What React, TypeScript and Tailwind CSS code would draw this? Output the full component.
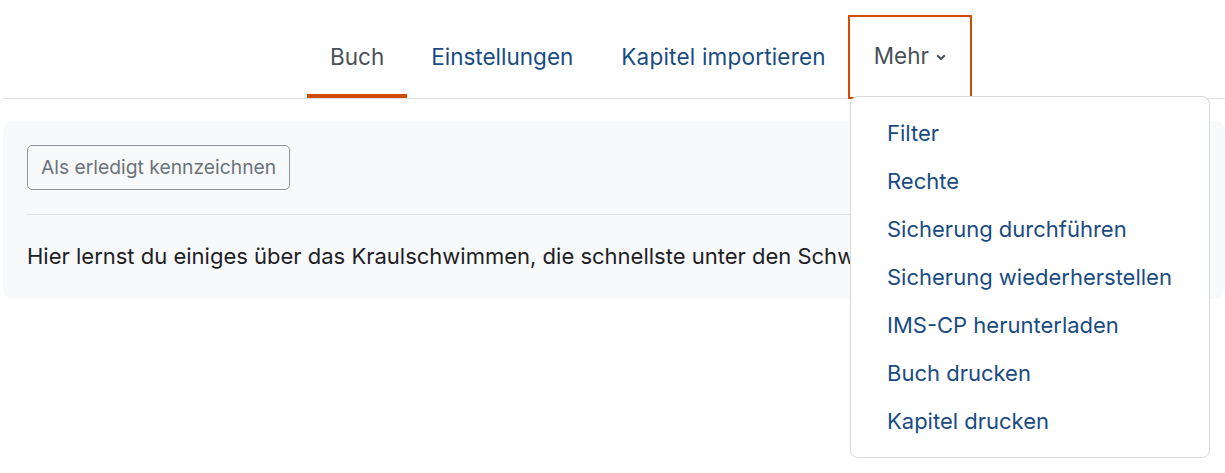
const tabs = ["Buch", "Einstellungen", "Kapitel importieren"];

const menuItems = [
  "Filter",
  "Rechte",
  "Sicherung durchführen",
  "Sicherung wiederherstellen",
  "IMS-CP herunterladen",
  "Buch drucken",
  "Kapitel drucken",
];

export default function App() {
  return (
    <div
      className="relative min-h-screen bg-white overflow-hidden pl-[3px]"
      style={{ fontFamily: "Inter, 'Noto Sans', sans-serif" }}
    >
      {/* Navigation */}
      <nav className="flex pl-[304px] pt-[17px] border-b border-[#dee2e6]">
        {tabs.map((t, i) => (
          <a
            key={t}
            href="#"
            className={
              i === 0
                ? "h-[81px] px-[23px] flex items-center text-[22.5px] text-[#495057] border-b-4 border-[#d14b02] pt-[2px]"
                : i === 2
                ? "h-[81px] px-6 flex items-center text-[22.5px] tracking-[0.2px] text-[#194b83] pb-[2px]"
                : "h-[81px] px-6 flex items-center text-[22.5px] text-[#194b83] pb-[2px]"
            }
          >
            {t}
          </a>
        ))}
        <button className="h-[80px] px-6 flex items-center gap-[7px] text-[22.5px] text-[#495057] outline-2 outline-[#d14b02] pb-[2px]">
          Mehr
          <svg width="10" height="7" viewBox="0 0 10 7" className="mt-[3px]">
            <path
              d="M1.2 1.2 L5 5 L8.8 1.2"
              fill="none"
              stroke="#495057"
              strokeWidth="2"
            />
          </svg>
        </button>
      </nav>

      {/* Inhalt */}
      <div className="mt-[22px] rounded-[10px] bg-[#f8f9fa] px-6 pt-6 pb-[28px]">
        <button className="h-[45px] px-[13px] rounded-[5px] border border-[#8f959e] text-[19.3px] text-[#6a737b]">
          Als erledigt kennzeichnen
        </button>
        <div className="mt-6 border-t border-[#dee2e6]" />
        <p className="mt-[26px] text-[22px] leading-[30px] text-[#1d2125] whitespace-nowrap">
          Hier lernst du einiges über das Kraulschwimmen, die schnellste unter den Schwimmarten.
        </p>
      </div>

      {/* Dropdown */}
      <div className="absolute left-[850px] top-[96px] w-[360px] rounded-[8px] border border-[#d8dbde] bg-white py-3">
        {menuItems.map((m) => (
          <a
            key={m}
            href="#"
            className="h-12 pl-9 flex items-center text-[22px] text-[#194b83]"
          >
            {m}
          </a>
        ))}
      </div>
    </div>
  );
}
